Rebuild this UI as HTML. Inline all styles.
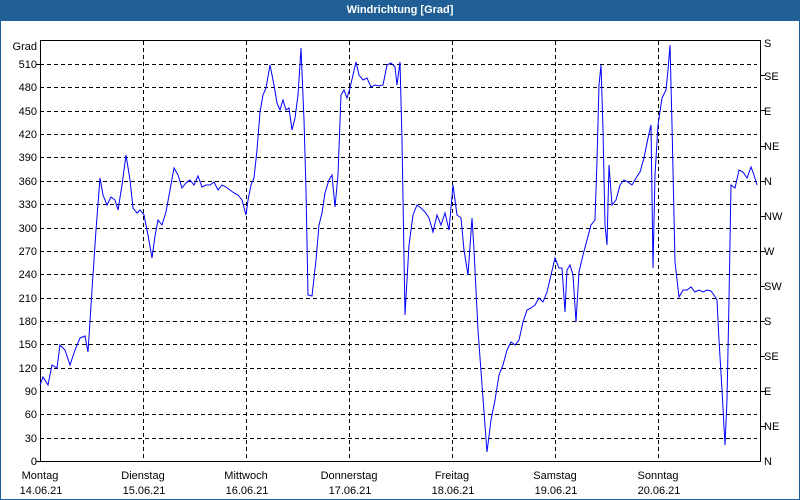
<!DOCTYPE html>
<html><head><style>
html,body{margin:0;padding:0;background:#fff;}
body{width:800px;height:500px;position:relative;overflow:hidden;font-family:"Liberation Sans","DejaVu Sans",sans-serif;}
#frame{position:absolute;left:0;top:0;width:798px;height:498px;border:1px solid #1f5f96;}
#title{position:absolute;left:0;top:0;width:800px;height:21px;background:#1f5f96;color:#fff;font-weight:bold;font-size:11px;text-align:center;line-height:20px;}
svg{position:absolute;left:0;top:0;}
text{font-family:"Liberation Sans","DejaVu Sans",sans-serif;font-size:11px;fill:#000;}
</style></head><body>
<div id="frame"></div>
<div id="title">Windrichtung [Grad]</div>
<svg width="800" height="500" viewBox="0 0 800 500">
<g stroke="#000" stroke-width="1" stroke-dasharray="4,3" fill="none" shape-rendering="crispEdges">
<line x1="40" y1="64.5" x2="757" y2="64.5"/><line x1="40" y1="87.5" x2="757" y2="87.5"/><line x1="40" y1="111.5" x2="757" y2="111.5"/><line x1="40" y1="134.5" x2="757" y2="134.5"/><line x1="40" y1="157.5" x2="757" y2="157.5"/><line x1="40" y1="181.5" x2="757" y2="181.5"/><line x1="40" y1="204.5" x2="757" y2="204.5"/><line x1="40" y1="228.5" x2="757" y2="228.5"/><line x1="40" y1="251.5" x2="757" y2="251.5"/><line x1="40" y1="274.5" x2="757" y2="274.5"/><line x1="40" y1="298.5" x2="757" y2="298.5"/><line x1="40" y1="321.5" x2="757" y2="321.5"/><line x1="40" y1="344.5" x2="757" y2="344.5"/><line x1="40" y1="368.5" x2="757" y2="368.5"/><line x1="40" y1="391.5" x2="757" y2="391.5"/><line x1="40" y1="414.5" x2="757" y2="414.5"/><line x1="40" y1="438.5" x2="757" y2="438.5"/>
<line x1="143.5" y1="41" x2="143.5" y2="461"/><line x1="246.5" y1="41" x2="246.5" y2="461"/><line x1="349.5" y1="41" x2="349.5" y2="461"/><line x1="452.5" y1="41" x2="452.5" y2="461"/><line x1="555.5" y1="41" x2="555.5" y2="461"/><line x1="658.5" y1="41" x2="658.5" y2="461"/>
</g>
<g stroke="#000" stroke-width="1" fill="none" shape-rendering="crispEdges">
<rect x="40.5" y="40.5" width="720" height="421"/>
<path d="M761 75.5h4M761 110.5h4M761 146.5h4M761 181.5h4M761 216.5h4M761 251.5h4M761 286.5h4M761 321.5h4M761 356.5h4M761 391.5h4M761 426.5h4M36 64.5h4M36 461.5h4"/>
</g>
<polyline fill="none" stroke="#0000ff" stroke-width="1" points="40,385 43,377 48,385 52,365 57,368 60,345 65,350 70,365 75,350 80,338 85,336 88,352 92,290 96,230 100,178 103,195 107,205 111,197 115,200 118,210 122,185 126,155 130,180 133,208 137,213 140,210 144,215 148,235 152,258 155,236 158,220 162,225 166,212 170,190 174,168 178,175 182,188 186,183 190,180 194,185 198,176 202,187 206,185 210,185 214,182 218,190 222,185 226,187 230,190 234,193 238,195 242,200 246,215 248,200 251,185 254,178 257,150 260,112 263,95 266,88 270,65 274,85 277,103 280,110 283,100 286,110 289,108 292,130 295,118 298,95 301,48 304,120 306,190 308,295 312,296 316,260 319,225 322,213 325,193 329,180 332,175 335,207 338,175 341,95 344,90 347,98 350,88 353,75 356,62 359,75 363,80 367,78 371,87 375,85 379,86 383,85 387,65 391,63 395,67 397,85 400,62 402,140 405,315 409,245 413,215 417,205 421,208 425,212 429,218 433,232 437,215 441,225 445,213 449,230 453,185 457,215 461,218 464,250 468,275 472,218 474,250 478,330 482,385 487,452 491,420 495,400 499,375 503,365 507,350 511,342 515,345 519,340 523,322 527,310 531,308 535,305 539,298 543,302 547,292 551,275 555,258 559,268 562,268 565,312 567,270 570,265 573,275 576,322 579,272 583,255 587,240 591,225 595,220 597,160 599,85 601,65 603,130 605,225 607,245 609,165 612,205 616,200 620,185 624,180 628,182 632,185 636,178 640,172 644,158 648,138 651,125 653,268 655,175 658,125 662,98 666,90 668,70 670,45 672,125 675,262 679,297 683,290 687,290 691,287 695,292 699,290 703,292 707,290 711,291 714,295 717,300 719,340 722,390 725,445 727,400 729,300 731,185 735,188 739,170 743,172 747,178 751,167 754,175 757,185"/>
<g text-anchor="end">
<text x="37" y="50">Grad</text>
<text x="37" y="68">510</text><text x="37" y="91">480</text><text x="37" y="115">450</text><text x="37" y="138">420</text><text x="37" y="161">390</text><text x="37" y="185">360</text><text x="37" y="208">330</text><text x="37" y="232">300</text><text x="37" y="255">270</text><text x="37" y="278">240</text><text x="37" y="302">210</text><text x="37" y="325">180</text><text x="37" y="348">150</text><text x="37" y="372">120</text><text x="37" y="395">90</text><text x="37" y="418">60</text><text x="37" y="442">30</text><text x="37" y="465">0</text>
</g>
<g>
<text x="764" y="47">S</text><text x="764" y="80">SE</text><text x="764" y="115">E</text><text x="764" y="150">NE</text><text x="764" y="185">N</text><text x="764" y="220">NW</text><text x="764" y="255">W</text><text x="764" y="290">SW</text><text x="764" y="325">S</text><text x="764" y="360">SE</text><text x="764" y="395">E</text><text x="764" y="430">NE</text><text x="764" y="465">N</text>
</g>
<g text-anchor="middle">
<text x="40" y="479">Montag</text><text x="41" y="494">14.06.21</text>
<text x="143" y="479">Dienstag</text><text x="144" y="494">15.06.21</text>
<text x="246" y="479">Mittwoch</text><text x="247" y="494">16.06.21</text>
<text x="349" y="479">Donnerstag</text><text x="350" y="494">17.06.21</text>
<text x="452" y="479">Freitag</text><text x="453" y="494">18.06.21</text>
<text x="555" y="479">Samstag</text><text x="556" y="494">19.06.21</text>
<text x="658" y="479">Sonntag</text><text x="659" y="494">20.06.21</text>
</g>
</svg>
</body></html>
